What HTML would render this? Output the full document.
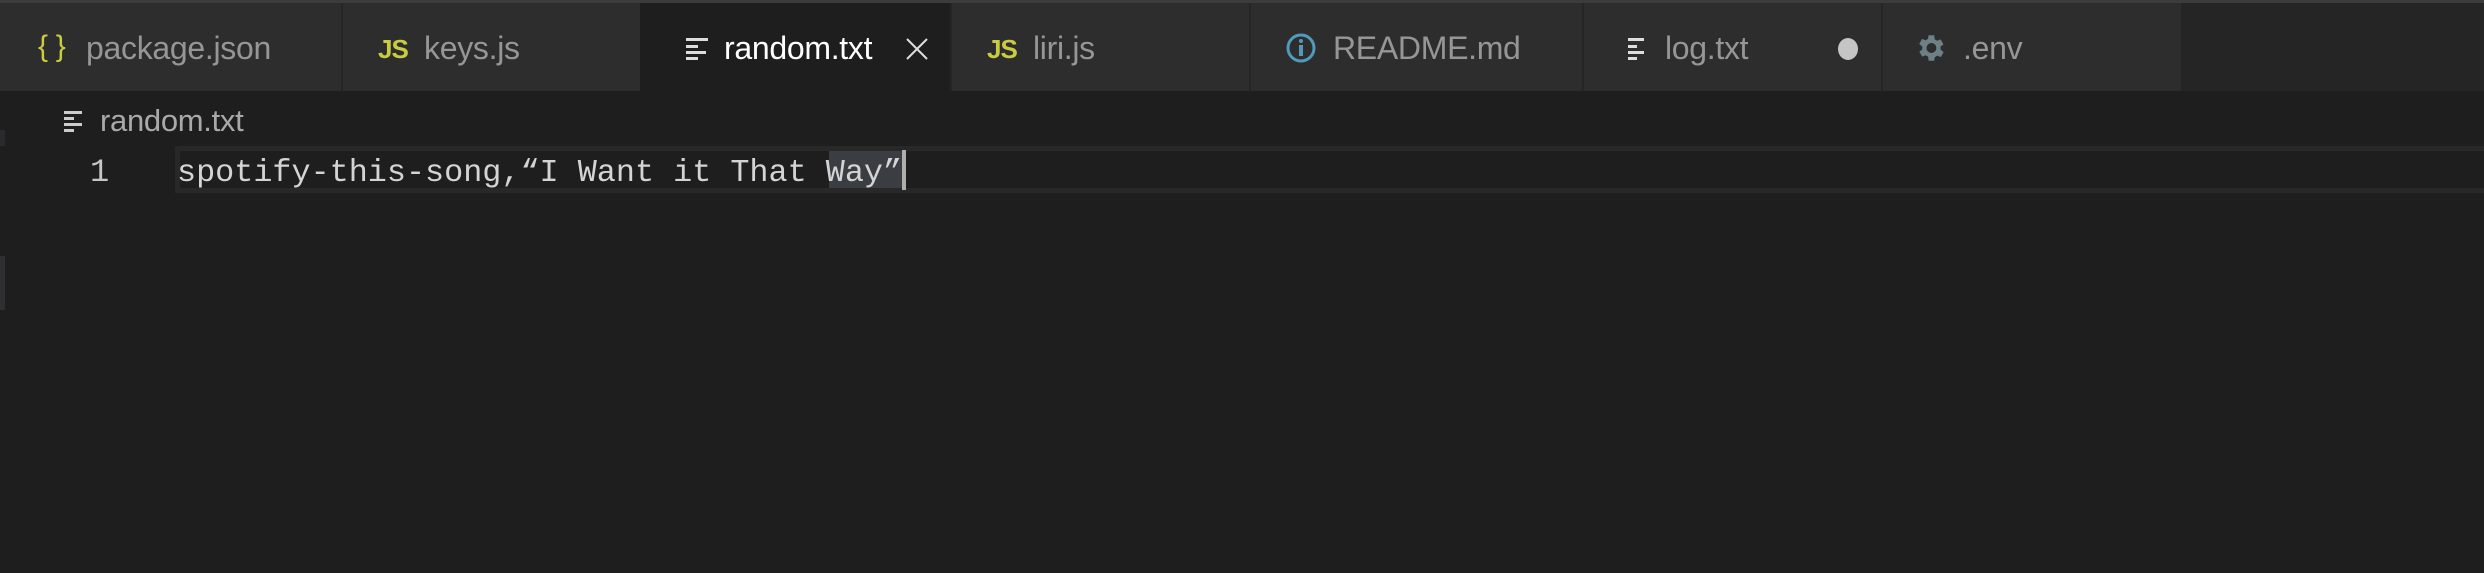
<!DOCTYPE html>
<html><head><style>
body{margin:0;width:2484px;height:573px;background:#1e1e1e;position:relative;overflow:hidden;font-family:"Liberation Sans",sans-serif}
.a{position:absolute;white-space:nowrap}
.tab{position:absolute;top:3px;height:88px;background:#2d2d2d}
.t{position:absolute;top:30px;font-size:32px;color:#969696;line-height:36px;letter-spacing:-0.3px}
</style></head><body>
<div class="a" style="left:0;top:0;width:2484px;height:3px;background:#3c3c3c"></div>
<div class="a" style="left:0;top:3px;width:2484px;height:88px;background:#252526"></div>
<div class="tab" style="left:0;width:341px"></div>
<div class="tab" style="left:343px;width:297px"></div>
<div class="tab" style="left:640px;width:310px;background:#1e1e1e"></div>
<div class="tab" style="left:952px;width:297px"></div>
<div class="tab" style="left:1251px;width:331px"></div>
<div class="tab" style="left:1584px;width:297px"></div>
<div class="tab" style="left:1883px;width:298px"></div>

<div class="t" style="left:38px;color:#cbcb41;font-size:30px;top:29px">{ }</div>
<div class="t" style="left:86px">package.json</div>
<div class="t" style="left:378px;color:#cbcb41;font-weight:bold;font-size:26px;top:31px;letter-spacing:-1px">JS</div>
<div class="t" style="left:424px">keys.js</div>
<svg class="a" style="left:686px;top:36px" width="24" height="24"><g fill="#ddd"><rect x="0" y="2" width="22" height="3"/><rect x="0" y="9" width="12" height="3"/><rect x="0" y="15" width="20" height="3"/><rect x="0" y="21" width="12" height="3"/></g></svg>
<div class="t" style="left:724px;color:#fff">random.txt</div>
<svg class="a" style="left:905px;top:37px" width="24" height="24"><path d="M2 2L22 22M22 2L2 22" stroke="#ddd" stroke-width="2"/></svg>
<div class="t" style="left:987px;color:#cbcb41;font-weight:bold;font-size:26px;top:31px;letter-spacing:-1px">JS</div>
<div class="t" style="left:1033px">liri.js</div>
<svg class="a" style="left:1285px;top:32px" width="32" height="32"><circle cx="16" cy="16" r="13" fill="none" stroke="#519aba" stroke-width="3"/><circle cx="16" cy="9" r="2" fill="#519aba"/><rect x="14" y="13" width="4" height="11" fill="#519aba"/></svg>
<div class="t" style="left:1333px">README.md</div>
<svg class="a" style="left:1628px;top:36px" width="24" height="24"><g fill="#ddd"><rect x="0" y="2" width="16" height="3"/><rect x="0" y="9" width="9" height="3"/><rect x="0" y="15" width="16" height="3"/><rect x="0" y="21" width="9" height="3"/></g></svg>
<div class="t" style="left:1665px">log.txt</div>
<div class="a" style="left:1838px;top:38px;width:20px;height:22px;border-radius:50%;background:#c5c5c5"></div>
<svg class="a" style="left:1913px;top:30px" width="34" height="36" viewBox="0 0 24 24"><path fill="#6d8086" d="M19.4 13a7.5 7.5 0 0 0 0-2l2.1-1.6-2-3.5-2.5 1a7 7 0 0 0-1.7-1L15 3h-4l-.4 2.6a7 7 0 0 0-1.700 1l-2.5-1-2 3.5L6.6 11a7.5 7.5 0 0 0 0 2l-2.1 1.6 2 3.5 2.5-1a7 7 0 0 0 1.7 1L11 21h4l.4-2.6a7 7 0 0 0 1.7-1l2.5 1 2-3.5zM13 15.5A3.5 3.5 0 1 1 13 8.5a3.5 3.5 0 0 1 0 7z"/></svg>
<div class="t" style="left:1963px">.env</div>

<svg class="a" style="left:64px;top:110px" width="20" height="22"><g fill="#ccc"><rect x="0" y="1" width="18" height="3"/><rect x="0" y="7" width="10" height="3"/><rect x="0" y="13" width="18" height="3"/><rect x="0" y="19" width="10" height="3"/></g></svg>
<div class="a" style="left:100px;top:103px;font-size:31px;color:#a9a9a9;letter-spacing:-0.3px">random.txt</div>

<div class="a" style="left:0;top:130px;width:5px;height:16px;background:#2a2a2e"></div>
<div class="a" style="left:0;top:256px;width:5px;height:54px;background:#2f2f33"></div>

<div class="a" style="left:175px;top:146px;width:2309px;height:37px;border:5px solid #282828;border-right:none"></div>
<div class="a" style="left:90px;top:153px;font-family:'Liberation Mono',monospace;font-size:32px;line-height:40px;color:#c6c6c6">1</div>
<div class="a" style="left:829px;top:151px;width:73px;height:37px;background:#3a3d41"></div>
<div class="a" style="left:902px;top:150px;width:4px;height:40px;background:#aeafad"></div>
<div class="a" style="left:177px;top:153px;font-family:'Liberation Mono',monospace;font-size:31.8px;line-height:40px;color:#d4d4d4">spotify-this-song,“I Want it That Way”</div>
</body></html>
